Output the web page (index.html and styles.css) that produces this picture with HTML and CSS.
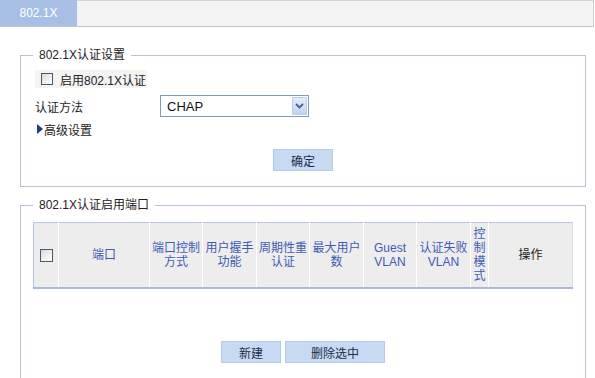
FILE: index.html
```html
<!DOCTYPE html>
<html>
<head>
<meta charset="utf-8">
<link rel="stylesheet" href="styles.css">
</head>
<body>
<div class="tabbar"><div class="tab">802.1X</div></div>

<fieldset class="box box-settings">
  <legend>802.1X认证设置</legend>
  <div class="chkrow"><span class="chk"></span><span>启用802.1X认证</span></div>
  <div class="formrow">
    <span class="lbl">认证方法</span>
    <div class="select"><span class="sel-text">CHAP</span><span class="sel-btn"><svg width="9" height="6" viewBox="0 0 9 6"><path d="M1 1 L4.5 4.5 L8 1" fill="none" stroke="#4a6290" stroke-width="1.8"/></svg></span></div>
  </div>
  <div class="adv"><span class="tri"></span>高级设置</div>
  <div class="btnrow"><button class="btn btn-ok">确定</button></div>
</fieldset>

<fieldset class="box box-ports">
  <legend>802.1X认证启用端口</legend>
  <table class="grid">
    <colgroup>
      <col class="c-chk"><col class="c-port"><col class="c-n"><col class="c-n2"><col class="c-n"><col class="c-n2"><col class="c-n"><col class="c-n2"><col class="c-mode"><col>
    </colgroup>
    <thead>
      <tr>
        <th><span class="chk"></span></th>
        <th>端口</th>
        <th>端口控制方式</th>
        <th>用户握手功能</th>
        <th>周期性重认证</th>
        <th>最大用户数</th>
        <th>Guest VLAN</th>
        <th>认证失败VLAN</th>
        <th class="narrow">控制模式</th>
        <th class="op">操作</th>
      </tr>
    </thead>
  </table>
  <div class="btnrow btnrow-ports"><button class="btn btn-new">新建</button><button class="btn btn-del">删除选中</button></div>
</fieldset>
</body>
</html>
```
FILE: styles.css
```css
html, body {
  margin: 0;
  padding: 0;
  background: #fff;
}
body {
  font-family: "Liberation Sans", "Noto Sans CJK SC", sans-serif;
  font-size: 12px;
  color: #222;
  width: 595px;
}
.tabbar {
  box-sizing: border-box;
  width: 594px;
  height: 27px;
  background: #f3f3f3;
  border-top: 1px solid #d4d4d4;
  border-bottom: 1px solid #c4c4c4;
  border-right: 1px solid #cfcfcf;
  display: flex;
}
.tab {
  width: 77px;
  margin-top: -1px;
  height: 26px;
  background: #a7bfe5;
  color: #fff;
  display: flex;
  align-items: center;
  justify-content: center;
  font-size: 12px;
}
.box {
  margin: 0 9px 0 20px;
  padding: 0 12px;
  border: 1px solid #b6c2d6;
  min-width: 0;
}
.box legend {
  padding: 0 6px;
  line-height: 16px;
  font-size: 12px;
  color: #222;
}
.box-settings {
  margin-top: 20px;
}
.box-ports {
  margin-top: 10px;
}
.chkrow {
  margin: 7px 0 0 2px;
  height: 18px;
  width: 112px;
  background: #f4f4f4;
  display: flex;
  align-items: center;
  padding-left: 6px;
  box-sizing: border-box;
  gap: 7px;
}
.chk {
  display: inline-block;
  box-sizing: border-box;
  width: 12px;
  height: 12px;
  border: 1px solid #4e5864;
  background: linear-gradient(135deg, #d8dbe0 0%, #f4f5f7 70%, #ffffff 100%);
}
.formrow {
  margin-top: 7px;
  display: flex;
  align-items: center;
  height: 22px;
}
.lbl {
  width: 125px;
  margin-left: 2px;
}
.select {
  box-sizing: border-box;
  width: 149px;
  height: 22px;
  border: 1px solid #7f9db9;
  background: #fff;
  display: flex;
  align-items: center;
  justify-content: space-between;
  padding: 1px;
}
.sel-text {
  font-family: "Liberation Sans", sans-serif;
  font-size: 13px;
  color: #111;
  padding-left: 5px;
}
.sel-btn {
  box-sizing: border-box;
  width: 15px;
  height: 18px;
  border: 1px solid #bccbe9;
  border-radius: 1px;
  background: linear-gradient(180deg, #e3ebfb 0%, #c2d3f3 100%);
  display: flex;
  align-items: center;
  justify-content: center;
}
.adv {
  margin: 4px 0 0 4px;
  height: 16px;
  display: flex;
  align-items: center;
  color: #222;
}
.tri {
  width: 0;
  height: 0;
  border-top: 5px solid transparent;
  border-bottom: 5px solid transparent;
  border-left: 6px solid #1d4272;
  margin-right: 1px;
}
.btnrow {
  display: flex;
  justify-content: center;
  gap: 4px;
  margin: 12px 0 15px;
}
.btn {
  height: 22px;
  border: 1px solid #b7c9e6;
  background: #c8daf3;
  color: #1b2a48;
  font-family: "Liberation Sans", "Noto Sans CJK SC", sans-serif;
  font-size: 12px;
  padding: 0;
}
.btn-ok, .btn-new {
  width: 60px;
}
.btn-del {
  width: 100px;
}
.grid {
  margin-top: 9px;
  width: 100%;
  border-collapse: collapse;
  table-layout: fixed;
  border-top: 1px solid #b9c8e0;
  border-left: 1px solid #b9c8e0;
  border-right: 1px solid #d6deeb;
  border-bottom: 2px solid #a8b8d6;
}
.c-chk { width: 25px; }
.c-port { width: 91px; }
.c-n { width: 53px; }
.c-n2 { width: 54px; }
.c-mode { width: 18px; }
.grid th {
  height: 64px;
  padding: 0;
  background: #ededed;
  border-left: 1px solid #fff;
  font-weight: normal;
  color: #3d5cb2;
  line-height: 14px;
  text-align: center;
  vertical-align: middle;
}
.grid th:first-child {
  border-left: none;
}
.grid th .chk {
  width: 13px;
  height: 13px;
  vertical-align: middle;
}
.grid th.narrow {
  word-break: break-all;
}
.grid th.op {
  color: #222;
}
.btnrow-ports {
  margin-top: 52px;
}
```
